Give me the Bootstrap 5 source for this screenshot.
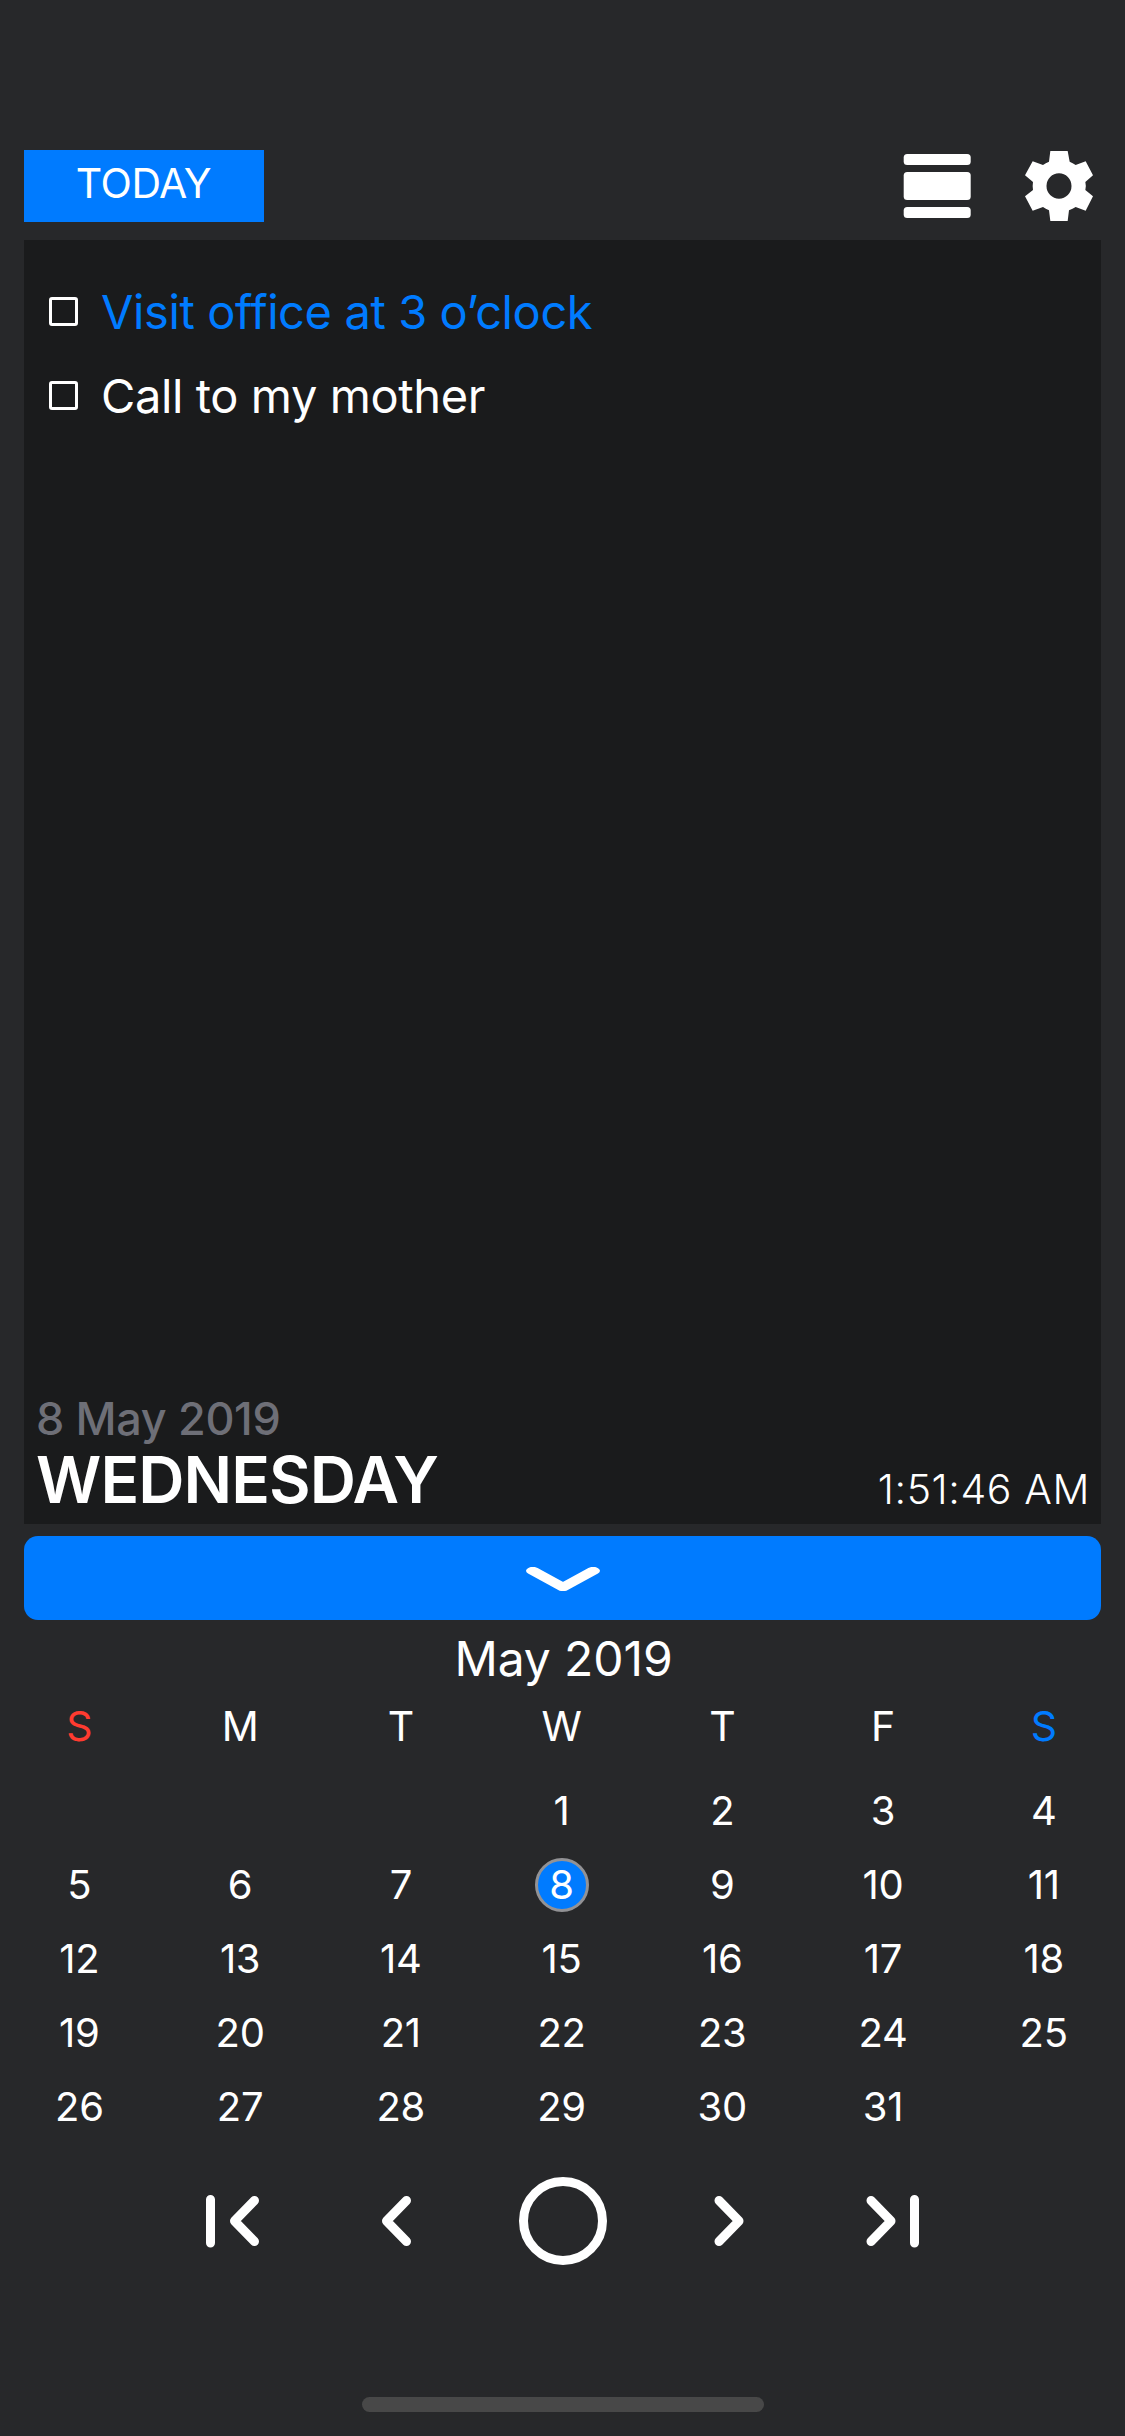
<!DOCTYPE html>
<html lang="en">
<head>
<meta charset="utf-8">
<meta name="viewport" content="width=device-width, initial-scale=1">
<title>May 2019</title>
<link rel="stylesheet" href="https://cdn.jsdelivr.net/npm/bootstrap@5.3.0/dist/css/bootstrap.min.css">
<style>
body{background:#27282a;color:#fff;font-family:Inter,sans-serif;min-height:2436px}
svg{display:block}
.screen{padding-top:150px;height:2436px}
.inset{margin-left:24px;margin-right:24px}
.topbar{height:72px;margin-bottom:18px}
.today-btn{width:240px;height:72px;padding:0 1px 5px 0;background:#007bff;border:0;border-radius:0;color:#fff;font-size:41px;line-height:67px;letter-spacing:-.5px}
.icon-btn{padding:0;border:0;border-radius:0;color:#fff}
.tools{gap:54px;margin-right:8px}
.day-panel{height:1284px;background:#1a1b1c;padding:30px 11px 13px 12px}
.task{height:84px;padding-left:13px;font-size:47px;letter-spacing:-.4px;white-space:nowrap}
.task .form-check-input{width:29px;height:29px;margin:0 23px 1px 0;background:transparent;border:3px solid #fff;border-radius:3px;flex:none}
.accent{color:#007bff}
.sunday{color:#ff3b30}
.date-line{font-size:45px;line-height:60px;font-weight:500;letter-spacing:-.35px;color:#6e6f77}
.weekday-line{font-size:64px;line-height:62px;font-weight:600;letter-spacing:-.9px}
.clock{font-size:41px;line-height:44px;font-weight:300;letter-spacing:.6px}
.fold-btn{height:84px;margin-top:12px;padding:2px 0 0;background:#007bff;border:0;border-radius:14px}
.month-name{padding-left:2px;font-size:48px;line-height:78px;letter-spacing:-.1px}
.calendar{margin-left:-1px;margin-right:1px}
.week{height:74px;font-size:40px;line-height:1;letter-spacing:-.3px}
.week-head{height:56px;margin-bottom:20px;font-size:41px}
.selected-day{width:54px;height:54px;background:#007bff;border:3px solid #929295}
.pager{width:825px;margin:32px auto 131px}
.home-bar{width:402px;height:15px;background:#484848}
</style>
</head>
<body>
<main class="screen d-flex flex-column">
  <header class="topbar inset d-flex justify-content-between">
    <button class="btn today-btn">TODAY</button>
    <div class="tools d-flex">
      <button class="btn icon-btn" aria-label="List view">
        <svg width="68" height="72" viewBox="0 0 68 72" fill="currentColor"><rect x=".7" y="4" width="67" height="11" rx="3.5"/><rect x=".7" y="22" width="67" height="28" rx="3.5"/><rect x=".7" y="57" width="67" height="11" rx="3.5"/></svg>
      </button>
      <button class="btn icon-btn" aria-label="Settings">
        <svg width="68" height="72" viewBox="495 60 204 216" fill="currentColor"><path fill-rule="evenodd" d="M571 63H623L629 95Q638 99 647 105L677 94 699 136 676 156Q679 168 676 180L699 199 677 242 647 231Q638 237 627 241L623 273H571L567 241Q557 237 549 231L518 242 495 199 519 180Q517 168 519 156L495 136 518 94 549 105Q557 99 567 95ZM597 130A37.500 38 0 1 0 597 206A37.500 38 0 1 0 597 130Z"/></svg>
      </button>
    </div>
  </header>

  <section class="day-panel inset d-flex flex-column justify-content-between">
    <div>
      <label class="task d-flex align-items-center accent"><input class="form-check-input" type="checkbox"><span>Visit office at 3 o’clock</span></label>
      <label class="task d-flex align-items-center"><input class="form-check-input" type="checkbox"><span>Call to my mother</span></label>
    </div>
    <div class="d-flex justify-content-between align-items-end">
      <div>
        <div class="date-line">8 May 2019</div>
        <div class="weekday-line">WEDNESDAY</div>
      </div>
      <div class="clock">1:51:46 AM</div>
    </div>
  </section>

  <button class="btn fold-btn inset" aria-label="Hide calendar">
    <svg class="mx-auto" width="74" height="24" viewBox="0 0 41.100 24" preserveAspectRatio="none" fill="none" stroke="#fff" stroke-width="7.600" stroke-linecap="round" stroke-linejoin="round"><path d="M3.800 3.800 20.550 20.200 37.300 3.800"/></svg>
  </button>

  <section>
    <div class="month-name text-center">May 2019</div>
    <div id="calendar" class="calendar"></div>
  </section>

  <nav class="pager d-flex">
    <button class="btn icon-btn w-100" aria-label="First">
      <svg class="mx-auto" width="90" height="90" viewBox="0 0 90 90" fill="none" stroke="currentColor" stroke-width="9" stroke-linecap="round" stroke-linejoin="round"><path d="M22.500 23.500V67M66.500 24.500 46.500 45 66.500 65.500"/></svg>
    </button>
    <button class="btn icon-btn w-100" aria-label="Previous">
      <svg class="mx-auto" width="90" height="90" viewBox="0 0 90 90" fill="none" stroke="currentColor" stroke-width="9" stroke-linecap="round" stroke-linejoin="round"><path d="M53.500 24.500 33.500 45 53.500 65.500"/></svg>
    </button>
    <button class="btn icon-btn w-100" aria-label="Now">
      <svg class="mx-auto" width="90" height="90" viewBox="0 0 90 90" fill="none" stroke="currentColor" stroke-width="9"><circle cx="45" cy="45" r="39.500"/></svg>
    </button>
    <button class="btn icon-btn w-100" aria-label="Next">
      <svg class="mx-auto" width="90" height="90" viewBox="0 0 90 90" fill="none" stroke="currentColor" stroke-width="9" stroke-linecap="round" stroke-linejoin="round"><path d="M36 24.500 56 45 36 65.500"/></svg>
    </button>
    <button class="btn icon-btn w-100" aria-label="Last">
      <svg class="mx-auto" width="90" height="90" viewBox="0 0 90 90" fill="none" stroke="currentColor" stroke-width="9" stroke-linecap="round" stroke-linejoin="round"><path d="M66.500 23.500V67M23 24.500 43 45 23 65.500"/></svg>
    </button>
  </nav>
  <div class="home-bar rounded-pill mx-auto"></div>
</main>
<script src="https://cdn.jsdelivr.net/npm/bootstrap@5.3.0/dist/js/bootstrap.bundle.min.js"></script>
<script>
const calendar = document.getElementById('calendar');
const cell = (content, extra = '') => `<div class="col d-flex align-items-center justify-content-center ${extra}">${content}</div>`;
const names = ['S', 'M', 'T', 'W', 'T', 'F', 'S'];
let html = '<div class="row g-0 week week-head">' + names.map((n, i) => cell(n, i === 0 ? 'sunday' : i === 6 ? 'accent' : '')).join('') + '</div>';
for (let first = -2; first <= 31; first += 7) {
  html += '<div class="row g-0 week">';
  for (let day = first; day < first + 7; day++) {
    const label = day > 0 && day <= 31 ? day : '';
    html += cell(day === 8 ? '<span class="selected-day rounded-circle d-flex align-items-center justify-content-center">8</span>' : label);
  }
  html += '</div>';
}
calendar.innerHTML = html;
</script>
</body>
</html>
